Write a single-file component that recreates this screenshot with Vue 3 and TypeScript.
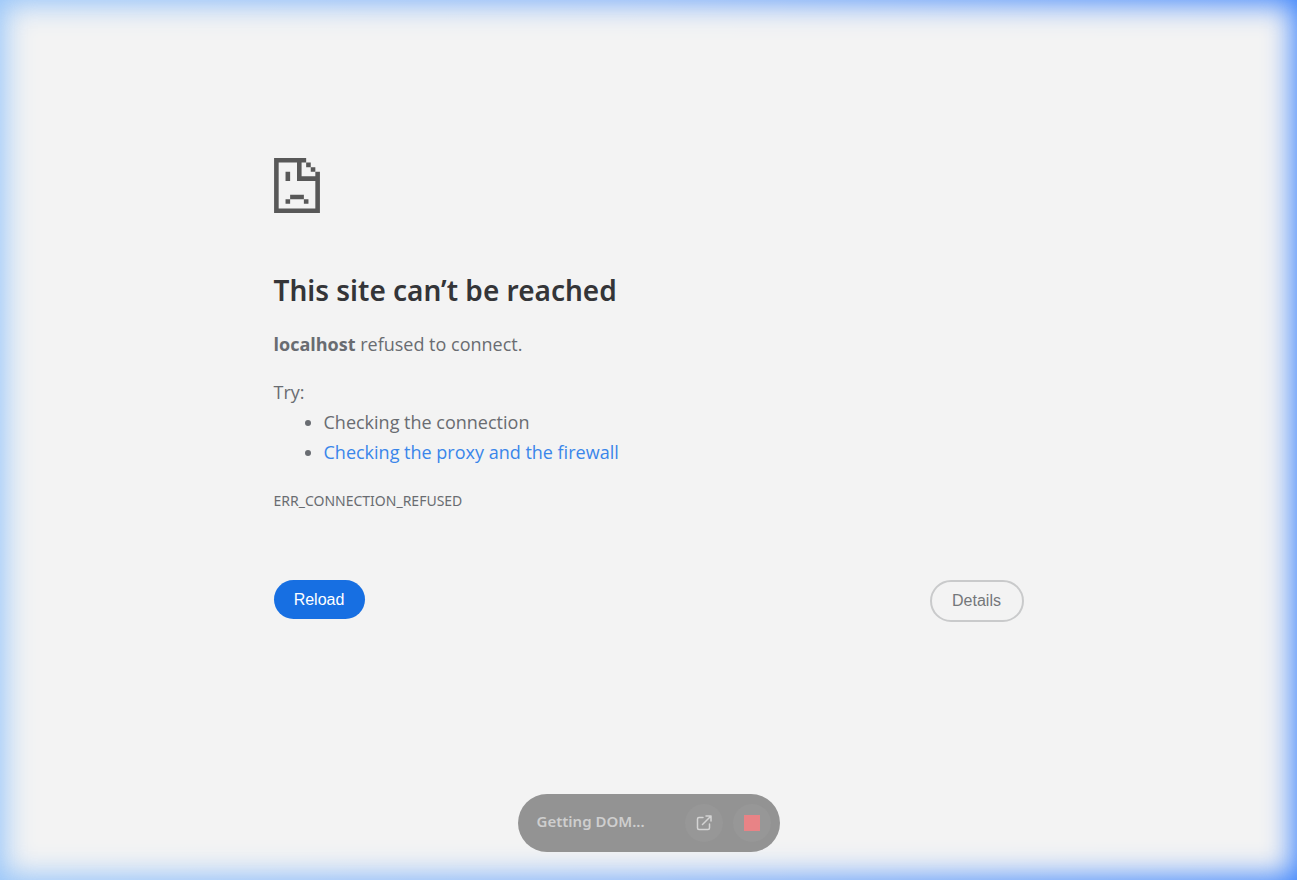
<script setup lang="ts">
const suggestions: { text: string; href?: string }[] = [
  { text: 'Checking the connection' },
  { text: 'Checking the proxy and the firewall', href: '#proxy' },
]

function reload(): void {
  window.location.reload()
}
</script>

<template>
  <div class="page">
    <div class="glow" aria-hidden="true"></div>
    <main class="content">
      <svg class="sad-page" viewBox="0 0 20 24" aria-hidden="true">
        <path d="M0 0h14v2h-2v6h6V6h2v18H0zM2 2v20h16V10h-8V2z" fill-rule="evenodd" />
        <path d="M14 2h2v2h-2zM16 4h2v2h-2zM5 6h2v4H5zM7 16h6v2H7zM5 18h2v2H5zM13 18h2v2h-2z" />
      </svg>
      <h1>This site can’t be reached</h1>
      <p class="summary"><strong>localhost</strong> refused to connect.</p>
      <p class="try">Try:</p>
      <ul>
        <li v-for="item in suggestions" :key="item.text">
          <a v-if="item.href" :href="item.href">{{ item.text }}</a>
          <span v-else>{{ item.text }}</span>
        </li>
      </ul>
      <p class="code">ERR_CONNECTION_REFUSED</p>
      <div class="actions">
        <button class="reload" type="button" @click="reload">Reload</button>
        <button class="details" type="button">Details</button>
      </div>
    </main>
    <div class="status">
      <span class="label">Getting DOM...</span>
      <button class="round" type="button" aria-label="Open in new window">
        <svg class="open" viewBox="0 0 16 16" aria-hidden="true">
          <path d="M7 2.5H3A1.5 1.5 0 0 0 1.5 4v9A1.5 1.5 0 0 0 3 14.5h9a1.5 1.5 0 0 0 1.5-1.5V9M10 1h5v5M15 1L6.5 9.5" />
        </svg>
      </button>
      <button class="round" type="button" aria-label="Stop"><span class="stop"></span></button>
    </div>
  </div>
</template>

<style>
body {
  margin: 0;
}
</style>

<style scoped>
.page {
  position: relative;
  box-sizing: border-box;
  min-height: 100vh;
  overflow: hidden;
  isolation: isolate;
  padding: 158px 24px 0;
  font-family: "Open Sans", "Noto Sans", sans-serif;
  color: #696c71;
  background: linear-gradient(to right, #98c6fa, #7fb0fa 50%, #4388fd);
}
.glow {
  position: absolute;
  z-index: -1;
  inset: 5px;
  background: #f3f3f3;
  filter: blur(14px);
}
.content {
  max-width: 750px;
  margin: 0 auto;
  font-size: 18px;
  line-height: 30px;
}
.sad-page {
  display: block;
  width: 46px;
  height: 55px;
  fill: #585858;
}
h1 {
  margin: 58px 0 0;
  font-family: "Noto Sans", sans-serif;
  font-size: 28px;
  font-weight: 600;
  line-height: 38px;
  color: #343538;
}
p {
  margin: 0;
}
.summary {
  margin-top: 20px;
}
.try {
  margin-top: 18px;
}
ul {
  margin: 0;
  padding-left: 50px;
}
a {
  color: #3a86ea;
  text-decoration: none;
}
.code {
  margin-top: 24px;
  font-family: "Noto Sans", sans-serif;
  font-size: 14px;
  line-height: 20px;
}
.actions {
  display: flex;
  justify-content: space-between;
  align-items: flex-start;
  margin-top: 69px;
}
button {
  box-sizing: border-box;
  padding: 0;
  font-family: "Liberation Sans", Arial, sans-serif;
  font-size: 16px;
  cursor: pointer;
}
.reload {
  width: 91px;
  height: 39px;
  border: 0;
  border-radius: 20px;
  color: #fff;
  background: #176fe2;
}
.details {
  width: 94px;
  height: 42px;
  border: 2px solid #c9cacb;
  border-radius: 21px;
  color: #74777a;
  background: transparent;
}
.status {
  position: absolute;
  left: 50%;
  bottom: 28px;
  transform: translateX(-50%);
  box-sizing: border-box;
  display: flex;
  align-items: center;
  gap: 10px;
  width: 262px;
  height: 58px;
  padding: 0 9px 0 19px;
  border-radius: 29px;
  background: #939393;
}
.label {
  flex: 1;
  padding-bottom: 4px;
  font-family: "Noto Sans", sans-serif;
  font-size: 15px;
  font-weight: 600;
  line-height: 20px;
  color: #cecece;
}
.round {
  display: grid;
  place-items: center;
  width: 38px;
  height: 38px;
  border: 0;
  border-radius: 50%;
  background: #979797;
}
.open {
  width: 16px;
  height: 16px;
  fill: none;
  stroke: #d4d4d4;
  stroke-width: 1.5;
  stroke-linecap: round;
  stroke-linejoin: round;
}
.stop {
  width: 16px;
  height: 16px;
  background: #e88386;
}
</style>
